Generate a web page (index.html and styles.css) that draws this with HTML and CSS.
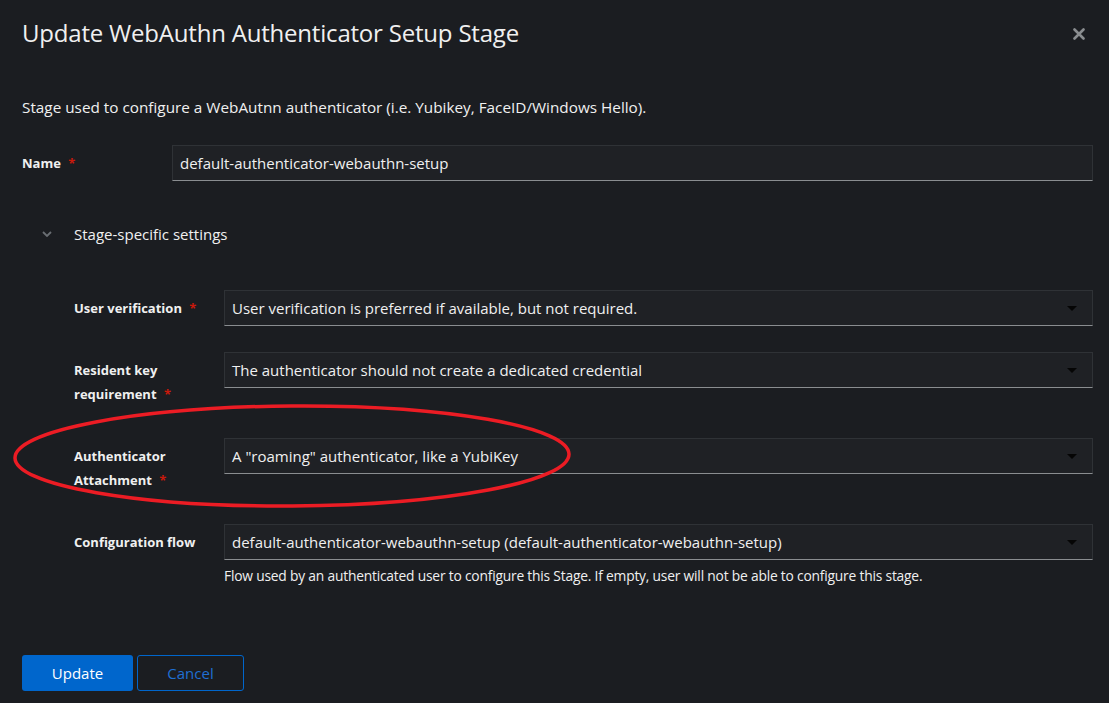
FILE: index.html
```html
<!DOCTYPE html>
<html lang="en">
<head>
  <meta charset="UTF-8" />
  <meta name="viewport" content="width=device-width, initial-scale=1.0" />
  <title>Update WebAuthn Authenticator Setup Stage</title>
  <link rel="stylesheet" href="styles.css">
</head>
<body>
  <div class="modal">
    <header class="modal-header">
      <h1>Update WebAuthn Authenticator Setup Stage</h1>
      <button class="close" aria-label="Close">
        <svg viewBox="0 0 12 12" width="12" height="12"><path d="M1.5 1.5 L10.5 10.5 M10.5 1.5 L1.5 10.5" stroke="currentColor" stroke-width="2.6" stroke-linecap="round"/></svg>
      </button>
    </header>

    <p class="desc">Stage used to configure a WebAutnn authenticator (i.e. Yubikey, FaceID/Windows Hello).</p>

    <form class="form">
      <div class="row">
        <label class="label">Name <span class="req">*</span></label>
        <div class="control"><input class="input" type="text" value="default-authenticator-webauthn-setup"></div>
      </div>

      <div class="expandable">
        <div class="toggle">
          <svg class="chev" viewBox="0 0 10 6" width="10" height="6"><path d="M1 1 L5 5 L9 1" fill="none" stroke="currentColor" stroke-width="1.8"/></svg>
          <span>Stage-specific settings</span>
        </div>

        <div class="nested">
          <div class="row">
            <label class="label">User verification <span class="req">*</span></label>
            <div class="control"><div class="select">User verification is preferred if available, but not required.<i class="caret"></i></div></div>
          </div>
          <div class="row">
            <label class="label">Resident key requirement <span class="req">*</span></label>
            <div class="control"><div class="select">The authenticator should not create a dedicated credential<i class="caret"></i></div></div>
          </div>
          <div class="row">
            <label class="label">Authenticator Attachment <span class="req">*</span></label>
            <div class="control"><div class="select">A "roaming" authenticator, like a YubiKey<i class="caret"></i></div></div>
          </div>
          <div class="row">
            <label class="label">Configuration flow</label>
            <div class="control">
              <div class="select">default-authenticator-webauthn-setup (default-authenticator-webauthn-setup)<i class="caret"></i></div>
              <p class="helper">Flow used by an authenticated user to configure this Stage. If empty, user will not be able to configure this stage.</p>
            </div>
          </div>
        </div>
      </div>
    </form>

    <footer class="actions">
      <button class="btn primary">Update</button>
      <button class="btn secondary">Cancel</button>
    </footer>
  </div>

  <svg class="mark" width="1109" height="703" viewBox="0 0 1109 703">
    <ellipse cx="292" cy="456" rx="277" ry="50" fill="none" stroke="#ec1c24" stroke-width="3.5" transform="rotate(-0.4 292 456)"/>
  </svg>
</body>
</html>
```

FILE: styles.css
```css
body { margin: 0; background-color: #1b1d21; color: #f0f0f0; font-family: "Open Sans", "Noto Sans", sans-serif; }
.modal { padding: 15px 16px 12px 22px; }
.modal-header { display: flex; align-items: center; justify-content: space-between; height: 34px; }
.modal-header h1 { margin: 0; font-size: 24px; font-weight: 500; letter-spacing: -0.2px; }
.close { background: none; border: none; color: #8a8d90; padding: 4px 8px; margin-top: 6px; cursor: pointer; }
.desc { margin: 46px 0 0; font-size: 15.3px; line-height: 24px; }
.form { margin-top: 26px; }
.row { display: grid; grid-template-columns: 150px 1fr; margin-bottom: 24px; }
.label { font-size: 13px; font-weight: 700; line-height: 24px; padding: 6px 12px 8px 0; }
.req { color: #c9190b; margin-left: 4px; }
.input, .select { box-sizing: border-box; width: 100%; height: 36px; background-color: #1f2125; border: 1px solid #2f3236; border-bottom-color: #8a8d90; color: #f0f0f0; font-family: inherit; font-size: 15px; padding: 0 7px; }
.select { display: flex; align-items: center; position: relative; padding-right: 40px; white-space: nowrap; }
.caret { position: absolute; right: 15px; top: 15px; width: 0; height: 0; border-left: 5px solid transparent; border-right: 5px solid transparent; border-top: 5px solid #050505; }
.expandable { margin-top: 39px; }
.toggle { display: flex; align-items: center; font-size: 15px; height: 24px; padding-left: 20px; }
.chev { color: #6a6e73; margin-right: 22px; }
.nested { margin-top: 44px; padding-left: 52px; }
.helper { margin: 6px 0 0; font-size: 13.8px; letter-spacing: -0.2px; line-height: 20px; }
.actions { display: flex; gap: 4px; margin-top: 69px; }
.btn { font-family: inherit; font-size: 15px; height: 36px; border-radius: 3px; cursor: pointer; }
.primary { width: 111px; background-color: #0066cc; color: #fff; border: none; }
.secondary { width: 107px; background: none; border: 1px solid #0066cc; color: #1f6fd2; }
.mark { position: absolute; top: 0; left: 0; pointer-events: none; }
```
